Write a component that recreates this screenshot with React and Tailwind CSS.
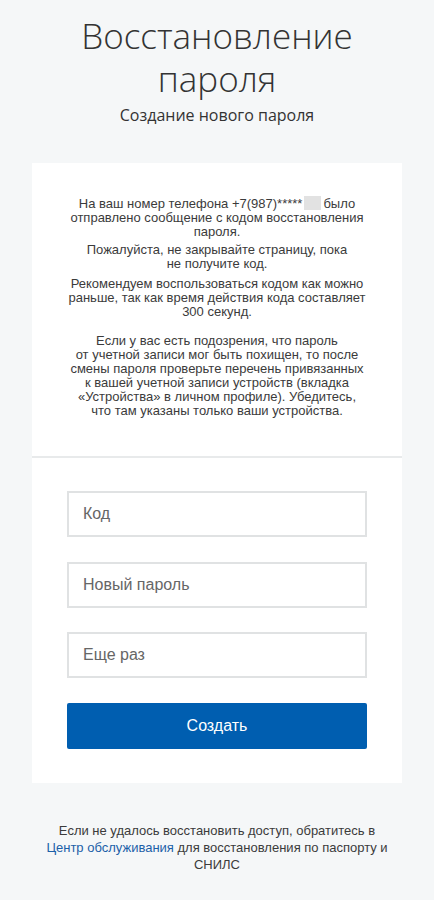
export default function App() {
  return (
    <div className="min-h-[900px] bg-[#f5f7f8] flex flex-col items-center">
      {/* Заголовок */}
      <h1 className="mt-[14px] text-center font-['Open_Sans',sans-serif] font-light text-[35px] leading-[43px] text-[#333]">
        Восстановление
        <br />
        пароля
      </h1>
      <p className="mt-[4px] text-center font-['Open_Sans',sans-serif] text-[16px] leading-[22px] text-[#333]">
        Создание нового пароля
      </p>

      {/* Карточка */}
      <div className="mt-[37px] w-[370px] bg-white font-['Liberation_Sans',Arial,sans-serif]">
        <div className="px-[30px] pt-[33px] pb-[38px] text-center text-[13px] leading-[14px] text-[#3b3b3b]">
          <p>
            На ваш номер телефона +7(987)*****
            <span className="inline-block w-[17px] h-[14px] align-[-2px] bg-[#e2e2e2] mx-[2px]"></span>
            было
            <br />
            отправлено сообщение с кодом восстановления
            <br />
            пароля.
          </p>
          <p className="mt-[4px]">
            Пожалуйста, не закрывайте страницу, пока
            <br />
            не получите код.
          </p>
          <p className="mt-[6px]">
            Рекомендуем воспользоваться кодом как можно
            <br />
            раньше, так как время действия кода составляет
            <br />
            300 секунд.
          </p>
          <p className="mt-[15px]">
            Если у вас есть подозрения, что пароль
            <br />
            от учетной записи мог быть похищен, то после
            <br />
            смены пароля проверьте перечень привязанных
            <br />
            к вашей учетной записи устройств (вкладка
            <br />
            «Устройства» в личном профиле). Убедитесь,
            <br />
            что там указаны только ваши устройства.
          </p>
        </div>

        <div className="h-[2px] bg-[#e8eaeb]"></div>

        <div className="px-[35px] pt-[33px] pb-[34px] flex flex-col gap-[24.5px]">
          <input
            placeholder="Код"
            className="h-[46px] w-full border-2 border-[#e0e2e3] px-[14px] text-[16px] text-[#333] placeholder:text-[#666] outline-none"
          />
          <input
            placeholder="Новый пароль"
            type="password"
            className="h-[46px] w-full border-2 border-[#e0e2e3] px-[14px] text-[16px] text-[#333] placeholder:text-[#666] outline-none"
          />
          <input
            placeholder="Еще раз"
            type="password"
            className="h-[46px] w-full border-2 border-[#e0e2e3] px-[14px] text-[16px] text-[#333] placeholder:text-[#666] outline-none"
          />
          <button className="h-[46px] w-full rounded-[2px] bg-[#005eb0] text-white text-[16px]">
            Создать
          </button>
        </div>
      </div>

      {/* Подвал */}
      <p className="mt-[39px] w-[360px] text-center font-['Liberation_Sans',Arial,sans-serif] text-[13px] leading-[17px] text-[#3b3b3b]">
        Если не удалось восстановить доступ, обратитесь в
        <br />
        <a href="#" className="text-[#1c5fa8]">Центр обслуживания</a> для восстановления по паспорту и
        <br />
        СНИЛС
      </p>
    </div>
  );
}
